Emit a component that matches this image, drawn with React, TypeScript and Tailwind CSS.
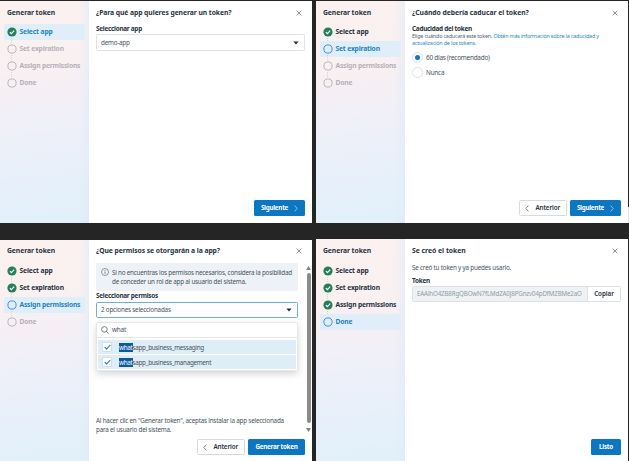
import type { ReactNode } from "react";

const STEPS = [
  { name: "Select app", tracking: "tracking-[-0.1px]" },
  { name: "Set expiration", tracking: "tracking-[-0.16px]" },
  { name: "Assign permissions", tracking: "tracking-[-0.18px]" },
  { name: "Done", tracking: "tracking-[-0.15px]" },
];

function StepIcon({ done, active }: { done: boolean; active: boolean }) {
  return (
    <svg width="10" height="10" viewBox="0 0 10 10" className="shrink-0">
      {done ? (
        <>
          <circle cx="5" cy="5" r="4.6" fill="#23805a" />
          <path d="M2.9 5.1 4.4 6.6 7.2 3.7" fill="none" stroke="#fff" strokeWidth="1.2" />
        </>
      ) : (
        <circle cx="5" cy="5" r="4.1" fill="none" stroke={active ? "#4a8af0" : "#b9b6bc"} strokeWidth="1" />
      )}
    </svg>
  );
}

function Sidebar({ active, done, upper }: { active: number; done: number; upper: boolean }) {
  return (
    <aside className="w-[89px] shrink-0 bg-[linear-gradient(90deg,rgba(224,234,248,0)_88%,rgba(224,234,248,0.55)_100%),linear-gradient(174deg,#fbf1f0_0%,#f9f0f1_28%,#f1eff7_50%,#e9f0fa_72%,#e1f0fa_100%)] pl-1">
      <h2
        className={`mt-[6px] h-[11px] pl-[3px] text-[6.8px] leading-[11px] font-bold tracking-[-0.08px] whitespace-nowrap text-[#29333d] ${upper ? "mb-[6px]" : "mb-[7px]"}`}
      >
        Generar token
      </h2>
      <ol className="flex flex-col gap-px">
        {STEPS.map((step, i) => {
          const isActive = i === active;
          const isDone = i < done;
          return (
            <li
              key={step.name}
              className={`relative flex h-4 w-[81px] items-center gap-[3px] rounded-[1px] pl-[2.5px] ${isActive ? "bg-[#dfeef8]" : ""}`}
            >
              <StepIcon done={isDone} active={isActive} />
              <span
                className={`text-[6.7px] leading-4 font-bold whitespace-nowrap ${step.tracking} ${isActive ? "text-[#1c84c2]" : isDone ? "text-[#29333d]" : "text-[#b5b1b8]"}`}
              >
                {step.name}
              </span>
              {i < 3 && (
                <span className="absolute top-[14px] left-[7px] h-[5px] border-l border-dotted border-[#d6d3da]" />
              )}
            </li>
          );
        })}
      </ol>
    </aside>
  );
}

function Panel({
  title,
  titleClass,
  active,
  done,
  children,
  footer,
  side,
  upper = false,
}: {
  title: string;
  titleClass: string;
  active: number;
  done: number;
  children: ReactNode;
  footer: ReactNode;
  side?: ReactNode;
  upper?: boolean;
}) {
  return (
    <section className="relative flex h-[222px] w-[312px] overflow-hidden bg-white">
      <Sidebar active={active} done={done} upper={upper} />
      <div className="relative flex w-[223px] flex-col pr-[7px] pl-[7px]">
        <header className="mt-[6px] flex h-[12px] shrink-0 items-center justify-between pr-[3px]">
          <h1 className={`text-[6.8px] leading-[12px] font-bold whitespace-nowrap text-[#29333d] ${titleClass}`}>{title}</h1>
          <svg width="6" height="6" viewBox="0 0 6 6">
            <path d="M.6.6 5.4 5.4M5.4.6.6 5.4" stroke="#5e6973" strokeWidth=".7" />
          </svg>
        </header>
        <div className="flex min-h-0 flex-1 flex-col">{children}</div>
        <footer className={`flex h-4 shrink-0 justify-end gap-[3.5px] ${upper ? "mb-[7px]" : "mb-[6px]"}`}>{footer}</footer>
        {side}
      </div>
    </section>
  );
}

function Chevron({ left = false }: { left?: boolean }) {
  return (
    <svg width="4" height="7" viewBox="0 0 4 7" className="shrink-0 opacity-80">
      <path d={left ? "M3.4.6.8 3.5l2.6 2.9" : "M.6.6l2.6 2.9L.6 6.4"} fill="none" stroke="currentColor" strokeWidth=".7" />
    </svg>
  );
}

function Primary({ label, width, arrow = false }: { label: string; width: string; arrow?: boolean }) {
  return (
    <button
      className={`flex h-4 items-center justify-center gap-[6px] rounded-[1.5px] bg-[#0c76c0] text-[6.3px] leading-4 font-bold tracking-[-0.27px] whitespace-nowrap text-white ${width}`}
    >
      {label}
      {arrow && <Chevron />}
    </button>
  );
}

function Previous() {
  return (
    <button className="flex h-4 w-[47.5px] items-center justify-center gap-[6px] rounded-[1.5px] border border-[#d5dbe0] bg-white text-[6.3px] font-semibold tracking-[-0.12px] text-[#29333d]">
      <Chevron left />
      Anterior
    </button>
  );
}

function Caret() {
  return (
    <svg width="6" height="4" viewBox="0 0 6 4">
      <path d="M.4.4h5.2L3 3.6z" fill="#1f2a33" />
    </svg>
  );
}

function Label({ children }: { children: ReactNode }) {
  return (
    <div className="h-[9px] shrink-0 text-[6.4px] leading-[9px] font-bold tracking-[-0.27px] whitespace-nowrap text-[#29333d]">
      {children}
    </div>
  );
}

function Option({ rest }: { rest: string }) {
  return (
    <div className="flex h-[14px] items-center rounded-[1px] bg-[#dfedf7] pl-[4px]">
      <span className="flex size-[10px] items-center justify-center rounded-[1px] border border-[#d3e0e9] bg-white">
        <svg width="7" height="6" viewBox="0 0 7 6" className="shrink-0">
          <path d="M.7 3.1 2.6 5 6.3 1" fill="none" stroke="#0c76c0" strokeWidth="1.1" />
        </svg>
      </span>
      <span className="ml-[7px] text-[6.3px] leading-[9px] tracking-[-0.29px] whitespace-nowrap text-[#47525c]">
        <span className="bg-[#0a5a9c] text-white">what</span>
        {rest}
      </span>
    </div>
  );
}

function Radio({ label, checked = false }: { label: string; checked?: boolean }) {
  return (
    <div className="flex h-[15px] shrink-0 items-center gap-[3px] text-[6.4px] tracking-[-0.23px] text-[#47525c]">
      <span className="flex size-[11px] items-center justify-center rounded-full border border-[#dce2e6] bg-white">
        {checked && <span className="size-[5px] rounded-full bg-[#0c76c0]" />}
      </span>
      {label}
    </div>
  );
}

function PermissionsScrollbar() {
  return (
    <div className="absolute top-[27px] right-[1px] flex w-[5px] flex-col items-center gap-[3px]">
      <svg width="5" height="4" viewBox="0 0 5 4">
        <path d="M2.5 0 5 4H0z" fill="#858585" />
      </svg>
      <div className="h-[150px] w-[4px] rounded-full bg-[#8b8b8b]" />
      <svg width="5" height="4" viewBox="0 0 5 4" className="mt-[2px]">
        <path d="M0 0h5L2.5 4z" fill="#858585" />
      </svg>
    </div>
  );
}

export default function App() {
  return (
    <main className="relative h-[461px] w-[629px] overflow-hidden bg-[#252525] pt-px font-['Noto_Sans','Open_Sans',sans-serif]">
      <div className="grid grid-cols-[312px_312px] gap-x-[4px] gap-y-[16px]">
        <Panel
          upper
          title="¿Para qué app quieres generar un token?"
          titleClass="tracking-[-0.08px]"
          active={0}
          done={1}
          footer={<Primary label="Siguiente" width="w-[51px]" arrow />}
        >
          <div className="mt-[5px]">
            <Label>Seleccionar app</Label>
          </div>
          <div className="mt-px flex h-[17px] items-center justify-between rounded-[1.5px] border border-[#dfe3e6] pr-[5px] pl-[4px] text-[6.3px] tracking-[-0.22px] text-[#47525c]">
            demo-app
            <Caret />
          </div>
        </Panel>

        <Panel
          upper
          title="¿Cuándo debería caducar el token?"
          titleClass="tracking-[-0.04px]"
          active={1}
          done={1}
          footer={
            <>
              <Previous />
              <Primary label="Siguiente" width="w-[51px]" arrow />
            </>
          }
        >
          <div className="mt-[5px]">
            <Label>Caducidad del token</Label>
          </div>
          <p className="mb-[2px] text-[5.4px] leading-[7.4px] tracking-[-0.18px] whitespace-nowrap text-[#56616b]">
            Elige cuándo caducará este token. <a className="text-[#2b89bb]">Obtén más información sobre la caducidad y<br />actualización de los tokens.</a>
          </p>
          <Radio label="60 días (recomendado)" checked />
          <Radio label="Nunca" />
        </Panel>

        <Panel
          title="¿Que permisos se otorgarán a la app?"
          titleClass="tracking-[-0.07px]"
          active={2}
          done={2}
          side={<PermissionsScrollbar />}
          footer={
            <>
              <Previous />
              <Primary label="Generar token" width="w-[57px]" />
            </>
          }
        >
          <div className="mt-[6px] flex h-[28px] w-[202px] shrink-0 gap-[3px] rounded-[1.5px] bg-[#eef2f6] pt-[5px] pl-[5px] text-[6.3px] leading-[9px] tracking-[-0.22px] whitespace-nowrap text-[#47525c]">
            <svg width="8" height="8" viewBox="0 0 8 8" className="shrink-0">
              <circle cx="4" cy="4" r="3.5" fill="none" stroke="#66717b" strokeWidth=".7" />
              <path d="M4 3.5v2.4M4 2v.8" stroke="#66717b" strokeWidth=".8" />
            </svg>
            <p>
              Si no encuentras los permisos necesarios, considera la posibilidad<br />de conceder un rol de app al usuario del sistema.
            </p>
          </div>
          <Label>Seleccionar permisos</Label>
          <div className="mt-[2px] flex h-4 w-[202px] shrink-0 items-center justify-between rounded-[1.5px] border border-[#70aed2] pr-[5px] pl-[4px] text-[6.3px] tracking-[-0.2px] text-[#47525c]">
            2 opciones seleccionadas
            <Caret />
          </div>
          <div className="mt-[4px] h-[49px] w-[202px] shrink-0 rounded-[1.5px] border border-[#e5e7e9] bg-white shadow-[0_3px_7px_rgba(0,0,0,0.16)]">
            <div className="flex h-[15px] items-center gap-[3px] border-b border-[#e3e6e8] pl-[4px] text-[6.4px] tracking-[-0.2px] text-[#47525c]">
              <svg width="8" height="8" viewBox="0 0 8 8">
                <circle cx="3.4" cy="3.4" r="2.8" fill="none" stroke="#4c5760" strokeWidth=".75" />
                <path d="m5.4 5.4 2.2 2.2" stroke="#4c5760" strokeWidth=".8" />
              </svg>
              what
            </div>
            <div className="flex flex-col gap-px px-px pt-[2px]">
              <Option rest="sapp_business_messaging" />
              <Option rest="sapp_business_management" />
            </div>
          </div>
          <p className="mt-auto mb-[5px] text-[6.3px] leading-[9px] tracking-[-0.21px] whitespace-nowrap text-[#47525c]">
            Al hacer clic en "Generar token", aceptas instalar la app seleccionada<br />para el usuario del sistema.
          </p>
        </Panel>

        <Panel
          title="Se creó el token"
          titleClass=""
          active={3}
          done={3}
          footer={<Primary label="Listo" width="w-[30px]" />}
        >
          <p className="mt-[6px] text-[6.3px] leading-[9px] tracking-[-0.2px] whitespace-nowrap text-[#47525c]">
            Se creó tu token y ya puedes usarlo.
          </p>
          <div className="mt-[4px]">
            <Label>Token</Label>
          </div>
          <div className="mt-[1px] flex h-4 overflow-hidden rounded-[1.5px] border border-[#dde2e6]">
            <span className="w-[175px] shrink-0 border-r border-[#dde2e6] bg-[#eef2f5] pl-[4px] text-[6.2px] leading-[14px] tracking-[-0.15px] whitespace-nowrap text-[#929ba2]">
              EAAlhO4ZB8RgQBOwN7fLMdZA0J8PGnzv04pDfMZBMe2aO
            </span>
            <button className="flex-1 text-[6.3px] leading-[14px] font-semibold tracking-[-0.05px] text-[#29333d]">Copiar</button>
          </div>
        </Panel>
      </div>
      <span className="absolute top-[239px] left-0 h-px w-[312px] bg-[#252525]" />
      <span className="absolute top-[207px] right-0 h-[16px] w-px bg-[#e4e4e4]" />
    </main>
  );
}
